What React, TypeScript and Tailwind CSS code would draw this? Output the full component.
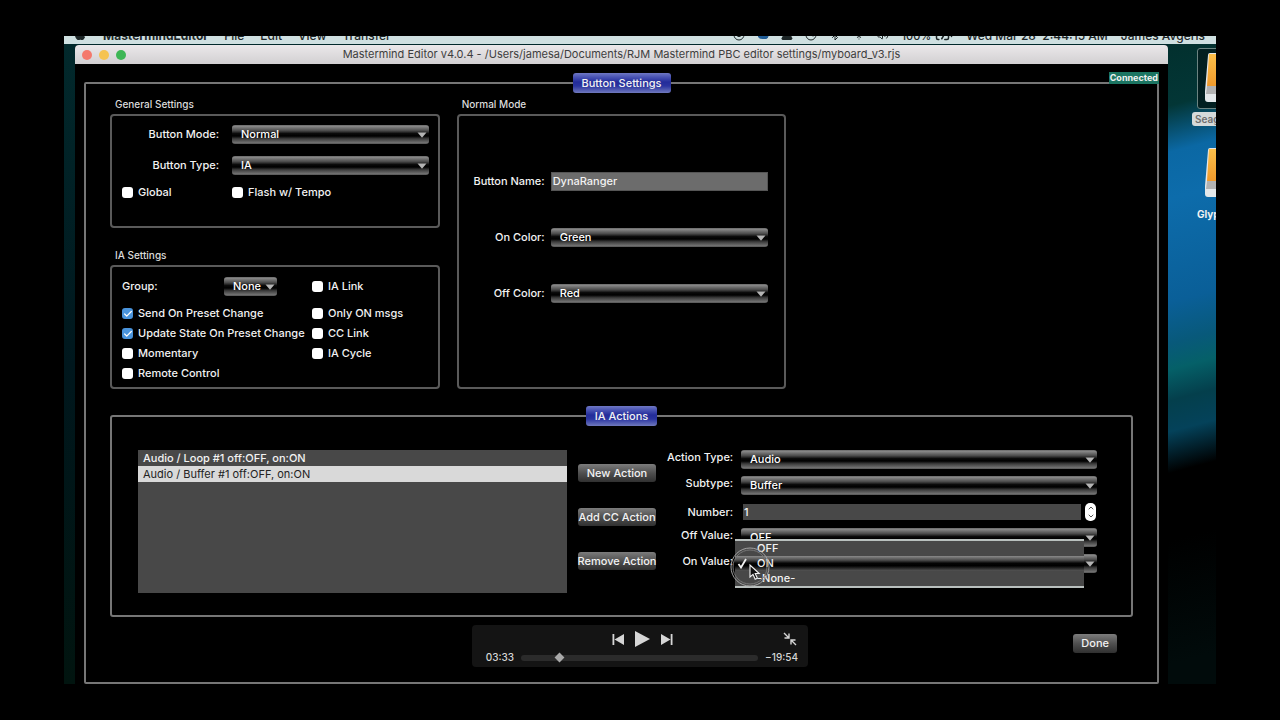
import { useState } from "react";
import type { ReactNode } from "react";
import {
  BatteryCharging,
  Bluetooth,
  Check,
  ChevronDown,
  ChevronUp,
  CircleStop,
  Clock,
  Cloud,
  Triangle,
  Volume2,
  Wifi,
} from "lucide-react";
import { FaApple } from "react-icons/fa";

type SelectProps = { id: string; value: string; options: string[]; className?: string };

const COLORS = ["Green", "Red", "Blue", "Yellow"];
const ACTIONS = ["Audio / Loop #1 off:OFF, on:ON", "Audio / Buffer #1 off:OFF, on:ON"];

function Select({ id, value, options, className = "" }: SelectProps) {
  const [current, setCurrent] = useState(value);
  return (
    <div className={`relative ${className}`}>
      <select
        id={id}
        value={current}
        onChange={(e) => setCurrent(e.target.value)}
        className="block h-[19px] w-full appearance-none rounded-[3px] bg-[linear-gradient(to_bottom,#6a6a6a_0%,#858585_8%,#4a4a4a_30%,#0a0a0a_45%,#000_58%,#3a3a3a_72%,#6e6e6e_92%,#555_100%)] pl-[9px] leading-[19px] text-white outline-none"
      >
        {options.map((o) => <option key={o}>{o}</option>)}
      </select>
      <svg viewBox="0 0 10 6" className="pointer-events-none absolute top-[7px] right-[2px] h-[6px] w-[10px]" aria-hidden="true">
        <path d="M0.5 0.5h9L5 5.8z" fill="#b4b4b4" />
      </svg>
    </div>
  );
}

function Checkbox({ label, checked = false }: { label: string; checked?: boolean }) {
  return (
    <label className="flex h-[14px] items-center gap-[5px] whitespace-nowrap">
      <span className="relative flex">
        <input type="checkbox" defaultChecked={checked} className="peer size-[11px] appearance-none rounded-[3px] bg-white checked:bg-[#4a94dc]" />
        <Check size={10} strokeWidth={3} className="pointer-events-none absolute top-px left-px hidden text-white peer-checked:block" />
      </span>
      {label}
    </label>
  );
}

function Panel({ title, className = "", children }: { title: string; className?: string; children: ReactNode }) {
  return (
    <section className={`flex flex-col ${className}`}>
      <h2 className="mb-[2px] h-[15px] pl-[5px] text-[10px] leading-[15px] text-[#dcdcdc]">{title}</h2>
      <div className="flex-1 rounded-[4px] border-2 border-[#5a5a5a]">{children}</div>
    </section>
  );
}

function Legend({ children }: { children: ReactNode }) {
  return (
    <legend className="mx-auto h-5 rounded-[3px] bg-[linear-gradient(to_bottom,#6f78c4_0%,#4a54b4_20%,#232c9a_45%,#2a34a0_65%,#7079bd_100%)] px-[9px] leading-5">
      {children}
    </legend>
  );
}

function PushButton({ children, className = "" }: { children: ReactNode; className?: string }) {
  return (
    <button
      type="button"
      className={`flex items-center justify-center rounded-[3px] bg-linear-to-b from-[#7c7c7c] via-[#505050] to-[#303030] whitespace-nowrap ${className}`}
    >
      {children}
    </button>
  );
}

function Drive() {
  return (
    <svg viewBox="0 0 44 50" className="h-[50px] w-[44px]" aria-hidden="true">
      <defs>
        <linearGradient id="drive" x1="0" y1="0" x2="0" y2="1">
          <stop offset="0" stopColor="#fcc04a" />
          <stop offset="1" stopColor="#f09a2c" />
        </linearGradient>
      </defs>
      <path d="M4 2Q4 0 6 0H38Q40 0 40 2L43 38V46Q43 49 40 49H4Q1 49 1 46V38z" fill="#e4e8ea" />
      <path d="M5 1H39L41 33H3z" fill="url(#drive)" />
      <path d="M3 33H41L42 41H2z" fill="#b2b2b2" />
    </svg>
  );
}

function MenuBar() {
  return (
    <header className="flex h-2 items-end justify-between overflow-hidden bg-[#cfe0e1] pr-[11px] pl-[9px] text-[12px] leading-4 whitespace-nowrap text-[#1c2526]">
      <nav className="flex items-end gap-4">
        <FaApple size={14} className="mb-[3px]" />
        <b className="font-bold">MastermindEditor</b>
        <span>File</span>
        <span>Edit</span>
        <span>View</span>
        <span>Transfer</span>
      </nav>
      <div className="flex items-end gap-[13px]">
        <div className="flex gap-[12px] pb-[3px]">
          <CircleStop size={12} />
          <Cloud size={12} className="fill-[#1f5c96] text-[#1f5c96]" />
          <Triangle size={12} className="fill-current" />
          <Clock size={12} />
          <Bluetooth size={12} />
          <Wifi size={12} />
          <Volume2 size={12} />
        </div>
        <span className="flex items-end gap-1 text-[11px]">100% <BatteryCharging size={18} /></span>
        <span>Wed Mar 28&nbsp; 2:44:15 AM</span>
        <span>James Avgeris</span>
      </div>
    </header>
  );
}

function GeneralSettings() {
  return (
    <Panel title="General Settings">
      <div className="grid grid-cols-[110px_1fr] pt-[9px] pr-[9px] pb-[27px] pl-[10px]">
        <label htmlFor="mode" className="pr-[13px] text-right leading-[19px]">Button Mode:</label>
        <Select id="mode" value="Normal" options={["Normal", "Page", "Preset"]} />
        <label htmlFor="type" className="mt-3 pr-[13px] text-right leading-[19px]">Button Type:</label>
        <Select id="type" value="IA" options={["IA", "Preset", "Bank"]} className="mt-3" />
        <div className="mt-[10px]"><Checkbox label="Global" /></div>
        <div className="mt-[10px]"><Checkbox label="Flash w/ Tempo" /></div>
      </div>
    </Panel>
  );
}

function IASettings() {
  return (
    <Panel title="IA Settings" className="mt-5">
      <div className="grid grid-cols-[190px_1fr] pt-[10px] pb-[7px] pl-[10px]">
        <div className="mb-[10px] flex w-[155px] items-center justify-between">
          <label htmlFor="group">Group:</label>
          <Select id="group" value="None" options={["None", "1", "2", "3"]} className="w-[53px]" />
        </div>
        <div className="mb-[10px] flex items-center"><Checkbox label="IA Link" /></div>
        <div className="flex flex-col gap-[6px]">
          <Checkbox label="Send On Preset Change" checked />
          <Checkbox label="Update State On Preset Change" checked />
          <Checkbox label="Momentary" />
          <Checkbox label="Remote Control" />
        </div>
        <div className="flex flex-col gap-[6px]">
          <Checkbox label="Only ON msgs" />
          <Checkbox label="CC Link" />
          <Checkbox label="IA Cycle" />
        </div>
      </div>
    </Panel>
  );
}

function NormalMode() {
  return (
    <Panel title="Normal Mode">
      <div className="grid grid-cols-[86px_1fr] items-center gap-x-[6px] gap-y-[37px] pt-14 pr-4 text-right leading-[19px]">
        <label htmlFor="name">Button Name:</label>
        <input id="name" defaultValue="DynaRanger" className="h-[19px] w-full min-w-0 border border-[#555] bg-[#6c6c6c] px-px outline-none" />
        <label htmlFor="on-color">On Color:</label>
        <Select id="on-color" value="Green" options={COLORS} />
        <label htmlFor="off-color">Off Color:</label>
        <Select id="off-color" value="Red" options={COLORS} />
      </div>
    </Panel>
  );
}

function ValueMenu() {
  return (
    <ul role="listbox" aria-label="On Value" className="absolute -top-[15px] right-[13px] -left-[6px] border-y-2 border-[#b9c0be] bg-[#484848] leading-[15px]">
      <li role="option" aria-selected="false" className="pl-[22px]">OFF</li>
      <li role="option" aria-selected="true" className="flex items-center bg-[linear-gradient(to_bottom,#8a8a8a_0%,#4a4a4a_28%,#050505_48%,#000_65%,#555_100%)]">
        <svg viewBox="0 0 11 11" className="mr-[9px] ml-[2px] size-[11px]" fill="none" stroke="#f2f2f2" strokeWidth="1.800" aria-hidden="true">
          <path d="M1.500 6L4 9.500L9 1" />
        </svg>
        ON
      </li>
      <li role="option" aria-selected="false" className="pl-[22px]">-None-</li>
    </ul>
  );
}

// Pointer with the ring that marks a click
function Pointer() {
  return (
    <svg viewBox="0 0 42 42" className="pointer-events-none absolute -top-[8px] -left-[12px] size-[42px]" aria-hidden="true">
      <circle cx="21" cy="21" r="19" fill="none" stroke="#a4a4a4" strokeWidth="1" />
      <circle cx="21" cy="21" r="17" fill="none" stroke="#777" strokeWidth="1" />
      <path d="M21 19v12l3-2.600 2.200 4.800 2.200-1-2.200-4.700h4z" fill="#111" stroke="#f2f2f2" strokeWidth="1.100" />
    </svg>
  );
}

function ActionForm() {
  const [number, setNumber] = useState(1);
  return (
    <div className="grid grid-cols-[66px_1fr] content-start gap-x-2 gap-y-[7px] text-right leading-[14px] whitespace-nowrap">
      <label htmlFor="action-type">Action Type:</label>
      <Select id="action-type" value="Audio" options={["Audio", "MIDI"]} />
      <label htmlFor="subtype">Subtype:</label>
      <Select id="subtype" value="Buffer" options={["Buffer", "Loop"]} />
      <label htmlFor="number" className="self-center">Number:</label>
      <div className="flex h-[19px] items-center gap-1 pr-px pl-[2px]">
        <input
          id="number"
          inputMode="numeric"
          value={number}
          onChange={(e) => setNumber(Number(e.target.value) || 0)}
          className="h-4 w-full min-w-0 bg-[#484848] px-px outline-none"
        />
        <div className="flex h-[18px] w-[11px] shrink-0 flex-col justify-center rounded-[5px] bg-white text-black">
          <button type="button" aria-label="Increase" onClick={() => setNumber(number + 1)}><ChevronUp size={8} className="mx-auto" /></button>
          <button type="button" aria-label="Decrease" onClick={() => setNumber(number - 1)}><ChevronDown size={8} className="mx-auto" /></button>
        </div>
      </div>
      <label htmlFor="off-value">Off Value:</label>
      <Select id="off-value" value="OFF" options={["OFF", "ON", "-None-"]} />
      <label htmlFor="on-value">On Value:</label>
      <div className="relative text-left">
        <Select id="on-value" value="ON" options={["OFF", "ON", "-None-"]} />
        <ValueMenu />
        <Pointer />
      </div>
    </div>
  );
}

function IAActions() {
  const [selected, setSelected] = useState(1);
  return (
    <fieldset className="mt-[17px] rounded-[3px] border-2 border-[#767676]">
      <Legend>IA Actions</Legend>
      <div className="grid grid-cols-[429fr_78px_430fr] gap-[11px] pt-6 pr-[34px] pb-[22px] pl-[26px]">
        <ul role="listbox" aria-label="Actions" className="min-h-[143px] bg-[#484848]">
          {ACTIONS.map((a, i) => (
            <li
              key={a}
              role="option"
              aria-selected={i === selected}
              onClick={() => setSelected(i)}
              className={i === selected ? "bg-[#d9d9d9] pl-[5px] leading-4 font-normal text-[#222]" : "pl-[5px] leading-4"}
            >
              {a}
            </li>
          ))}
        </ul>
        <div className="flex flex-col gap-[26px] pt-[14px]">
          <PushButton className="h-[18px]">New Action</PushButton>
          <PushButton className="h-[18px]">Add CC Action</PushButton>
          <PushButton className="h-[18px]">Remove Action</PushButton>
        </div>
        <ActionForm />
      </div>
    </fieldset>
  );
}

function Player() {
  return (
    <div className="absolute bottom-[17px] left-1/2 w-[336px] -translate-x-1/2 rounded-[4px] bg-[#141414] px-[10px] pt-[6px] pb-[3px] text-[10px] text-[#d6d6d6]">
      <div className="grid grid-cols-[1fr_auto_1fr] items-center pl-1">
        <span />
        <div className="flex items-center gap-[11px]">
          <button type="button" aria-label="Previous">
            <svg viewBox="0 0 12 11" className="h-[11px] w-3" fill="currentColor"><path d="M0.500 0h1.800v11H0.500zM12 0v11L2.500 5.500z" /></svg>
          </button>
          <button type="button" aria-label="Play">
            <svg viewBox="0 0 15 16" className="h-4 w-[15px]" fill="currentColor"><path d="M0 0L15 8L0 16z" /></svg>
          </button>
          <button type="button" aria-label="Next">
            <svg viewBox="0 0 12 11" className="h-[11px] w-3" fill="currentColor"><path d="M11.500 0H9.700v11h1.800zM0 0v11l9.500-5.500z" /></svg>
          </button>
        </div>
        <button type="button" aria-label="Exit full screen" className="mr-[1px] justify-self-end">
          <svg viewBox="0 0 14 14" className="size-[14px]" fill="none" stroke="currentColor" strokeWidth="1.400">
            <path d="M1 1l4.500 4.500M1.500 6h4.500V1.500M13 13L8.500 8.500M8 12.500V8h4.500" />
          </svg>
        </button>
      </div>
      <div className="mt-1 flex items-center gap-[7px] leading-[13px]">
        <span className="w-[32px] text-right">03:33</span>
        <input
          type="range"
          aria-label="Position"
          min={0}
          max={1407}
          defaultValue={213}
          className="h-[6px] min-w-0 flex-1 appearance-none rounded-full bg-[#2b2b2b] [&::-webkit-slider-thumb]:size-[7px] [&::-webkit-slider-thumb]:rotate-45 [&::-webkit-slider-thumb]:appearance-none [&::-webkit-slider-thumb]:bg-[#a9a9a9]"
        />
        <span>−19:54</span>
      </div>
    </div>
  );
}

export default function App() {
  return (
    <div className="flex min-h-screen bg-black px-16 py-9 font-['Inter','Liberation_Sans',sans-serif] text-[11px] font-medium text-[#f2f2f2]">
      <div className="relative flex min-w-0 flex-1 flex-col overflow-hidden bg-[#012226]">
        <MenuBar />
        <div className="flex flex-1 bg-linear-to-b from-[#02292c] via-[#00171d] to-[#01140f] pt-px pl-[11px]">
          <main className="flex min-w-0 flex-1 flex-col rounded-t-[4px] bg-black">
            <div className="relative flex h-[19px] items-center justify-center rounded-t-[4px] bg-linear-to-b from-[#ebe8ea] to-[#d2d0d2] font-normal whitespace-nowrap text-[#3e3e3e]">
              <div className="absolute left-[7px] flex gap-[7px]">
                <span className="size-[10px] rounded-full bg-[#f4796c]" />
                <span className="size-[10px] rounded-full bg-[#f5c351]" />
                <span className="size-[10px] rounded-full bg-[#3db655]" />
              </div>
              <h1>Mastermind Editor v4.0.4 - /Users/jamesa/Documents/RJM Mastermind PBC editor settings/myboard_v3.rjs</h1>
            </div>
            <div className="relative flex flex-1 flex-col px-[9px] pt-[9px]">
              <fieldset className="flex-1 rounded-[2px] border-2 border-[#767676]">
                <Legend>Button Settings</Legend>
                <div className="px-6 pt-1 pb-7">
                  <div className="grid grid-cols-3 gap-[17px]">
                    <div className="flex flex-col">
                      <GeneralSettings />
                      <IASettings />
                    </div>
                    <NormalMode />
                  </div>
                  <IAActions />
                  <div className="mt-[17px] flex justify-end pr-4">
                    <PushButton className="h-[19px] px-2">Done</PushButton>
                  </div>
                </div>
              </fieldset>
              <span className="absolute top-2 right-[9px] bg-[#1c7562] px-px text-[9px] leading-3 font-bold">Connected</span>
            </div>
          </main>
          <aside className="-mt-px w-12 overflow-hidden bg-[linear-gradient(165deg,#02302e_0px,#033636_60px,#0b68a4_105px,#0d6cab_150px,#0a5f98_250px,#08597a_290px,#056068_315px,#043f4c_345px,#04425a_375px,#000_415px,#000_480px,#010b0b_600px)]">
            <div className="w-[84px] pt-1 pl-6">
              <div className="flex w-[70px] flex-col pl-[5px]">
                <div className="h-[61px] w-[60px] rounded-[3px] border border-[#6c8482] bg-[#021f20] pt-1 pl-[6px]"><Drive /></div>
              </div>
              <p className="mt-[3px] w-[70px] rounded-[3px] bg-[#d5dada] pl-[3px] text-[10px] leading-[14px] font-semibold text-[#6e6e6e]">Seag</p>
              <div className="mt-[22px] pl-3"><Drive /></div>
              <p className="mt-2 pl-[5px] text-[10px] leading-4 font-bold">Glyp</p>
            </div>
          </aside>
        </div>
        <Player />
      </div>
    </div>
  );
}
